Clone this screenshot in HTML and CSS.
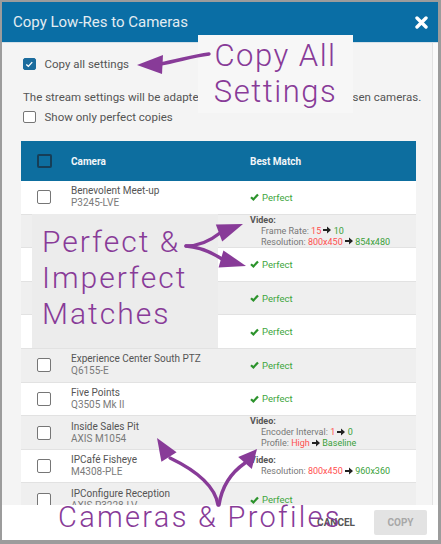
FILE: index.html
```html
<!DOCTYPE html>
<html lang="en">
<head>
<meta charset="utf-8">
<title>Copy Low-Res to Cameras</title>
<link rel="stylesheet" href="styles.css">
</head>
<body>
<div class="frame">
  <header class="dlg-head">
    <h1 class="dlg-title">Copy Low-Res to Cameras</h1>
    <svg class="close" viewBox="0 0 13 13" aria-label="Close"><path d="M2 2 L11 11 M11 2 L2 11" stroke="#fff" stroke-width="3.4" stroke-linecap="round"/></svg>
  </header>
  <div class="dlg-body">
    <div class="content">
      <label class="opt"><span class="cb checked"><svg viewBox="0 0 12 12"><path d="M2.6 6.2 L5 8.4 L9.4 3.6" fill="none" stroke="#fff" stroke-width="1.6"/></svg></span>Copy all settings</label>
      <p class="note">The stream settings will be adapted to the capabilities of the chosen cameras.</p>
      <label class="opt"><span class="cb"></span>Show only perfect copies</label>

      <div class="cams">
        <div class="thead">
          <span class="cell-cb"><span class="cb cb-head"></span></span>
          <span>Camera</span>
          <span>Best Match</span>
        </div>
        <div class="row">
          <span class="cell-cb"><span class="cb"></span></span>
          <span class="cam"><span class="name">Benevolent Meet-up</span><span class="model">P3245-LVE</span></span>
          <span class="ok"><svg class="chk" viewBox="0 0 9 8"><path d="M1 4.2 L3.4 6.4 L8 1.4" fill="none" stroke-width="2.2"/></svg>Perfect</span>
        </div>
        <div class="row">
          <span class="cell-cb"><span class="cb"></span></span>
          <span class="cam"><span class="name">Back Entrance</span><span class="model">M3106-L Mk II</span></span>
          <span class="detail"><b>Video:</b><span class="ln">Frame Rate: <i class="bad">15</i> <svg class="arr" viewBox="0 0 8 8"><path d="M0 3 H4 V0.4 L8 4 L4 7.6 V5 H0 Z"/></svg> <i class="good">10</i></span><span class="ln">Resolution: <i class="bad">800x450</i> <svg class="arr" viewBox="0 0 8 8"><path d="M0 3 H4 V0.4 L8 4 L4 7.6 V5 H0 Z"/></svg> <i class="good">854x480</i></span></span>
        </div>
        <div class="row">
          <span class="cell-cb"><span class="cb"></span></span>
          <span class="cam"><span class="name">Board Room</span><span class="model">P3225-LV Mk II</span></span>
          <span class="ok"><svg class="chk" viewBox="0 0 9 8"><path d="M1 4.2 L3.4 6.4 L8 1.4" fill="none" stroke-width="2.2"/></svg>Perfect</span>
        </div>
        <div class="row">
          <span class="cell-cb"><span class="cb"></span></span>
          <span class="cam"><span class="name">Break Room</span><span class="model">M3046-V</span></span>
          <span class="ok"><svg class="chk" viewBox="0 0 9 8"><path d="M1 4.2 L3.4 6.4 L8 1.4" fill="none" stroke-width="2.2"/></svg>Perfect</span>
        </div>
        <div class="row">
          <span class="cell-cb"><span class="cb"></span></span>
          <span class="cam"><span class="name">Conference Room A</span><span class="model">P3245-V</span></span>
          <span class="ok"><svg class="chk" viewBox="0 0 9 8"><path d="M1 4.2 L3.4 6.4 L8 1.4" fill="none" stroke-width="2.2"/></svg>Perfect</span>
        </div>
        <div class="row">
          <span class="cell-cb"><span class="cb"></span></span>
          <span class="cam"><span class="name">Experience Center South PTZ</span><span class="model">Q6155-E</span></span>
          <span class="ok"><svg class="chk" viewBox="0 0 9 8"><path d="M1 4.2 L3.4 6.4 L8 1.4" fill="none" stroke-width="2.2"/></svg>Perfect</span>
        </div>
        <div class="row">
          <span class="cell-cb"><span class="cb"></span></span>
          <span class="cam"><span class="name">Five Points</span><span class="model">Q3505 Mk II</span></span>
          <span class="ok"><svg class="chk" viewBox="0 0 9 8"><path d="M1 4.2 L3.4 6.4 L8 1.4" fill="none" stroke-width="2.2"/></svg>Perfect</span>
        </div>
        <div class="row">
          <span class="cell-cb"><span class="cb"></span></span>
          <span class="cam"><span class="name">Inside Sales Pit</span><span class="model">AXIS M1054</span></span>
          <span class="detail"><b>Video:</b><span class="ln">Encoder Interval: <i class="bad">1</i> <svg class="arr" viewBox="0 0 8 8"><path d="M0 3 H4 V0.4 L8 4 L4 7.6 V5 H0 Z"/></svg> <i class="good">0</i></span><span class="ln">Profile: <i class="bad">High</i> <svg class="arr" viewBox="0 0 8 8"><path d="M0 3 H4 V0.4 L8 4 L4 7.6 V5 H0 Z"/></svg> <i class="good">Baseline</i></span></span>
        </div>
        <div class="row">
          <span class="cell-cb"><span class="cb"></span></span>
          <span class="cam"><span class="name">IPCafé Fisheye</span><span class="model">M4308-PLE</span></span>
          <span class="detail"><b>Video:</b><span class="ln">Resolution: <i class="bad">800x450</i> <svg class="arr" viewBox="0 0 8 8"><path d="M0 3 H4 V0.4 L8 4 L4 7.6 V5 H0 Z"/></svg> <i class="good">960x360</i></span></span>
        </div>
        <div class="row">
          <span class="cell-cb"><span class="cb"></span></span>
          <span class="cam"><span class="name">IPConfigure Reception</span><span class="model">AXIS P3228-LV</span></span>
          <span class="ok"><svg class="chk" viewBox="0 0 9 8"><path d="M1 4.2 L3.4 6.4 L8 1.4" fill="none" stroke-width="2.2"/></svg>Perfect</span>
        </div>
      </div>
    </div>
    <div class="scroll-track"></div>
  </div>
  <footer class="dlg-foot">
    <button class="btn-cancel" type="button">CANCEL</button>
    <button class="btn-copy" type="button" disabled>COPY</button>
  </footer>

  <div class="anno anno-copy">Copy All<br>Settings</div>
  <div class="anno anno-match">Perfect &amp;<br>Imperfect<br>Matches</div>
  <div class="anno anno-cams">Cameras &amp; Profiles</div>

  <svg class="arrows" viewBox="0 0 441 544" aria-hidden="true">
    <g fill="none" stroke="#883b98" stroke-width="3.4" stroke-linecap="round">
      <path d="M209 54 C192 56 178 61 160 64"/>
      <path d="M186 246 C200 246 210 241 220 233"/>
      <path d="M186 246 C200 247 211 252 222 259"/>
      <path d="M218 505 C215 485 195 470 170 458"/>
      <path d="M219 505 C222 485 232 472 245 463"/>
    </g>
    <g fill="#883b98">
      <polygon points="137,65 163,55 162,74"/>
      <polygon points="243,224 215.8,224.5 222.2,241.5"/>
      <polygon points="246,266 223.4,250.4 218.6,267.6"/>
      <polygon points="157,438 176.6,452.2 161.4,461.8"/>
      <polygon points="257,449 238.2,457.1 251.8,468.9"/>
    </g>
  </svg>
</div>
</body>
</html>
```
FILE: styles.css
```css
html, body {
  margin: 0;
  padding: 0;
  background: #fff;
}

.frame {
  position: relative;
  width: 441px;
  height: 544px;
  box-sizing: border-box;
  border-style: solid;
  border-color: #9c9c9c;
  border-width: 2px 3px 4px 2px;
  display: flex;
  flex-direction: column;
  overflow: hidden;
  font-family: Roboto, "Liberation Sans", sans-serif;
}

/* header */
.dlg-head {
  flex: none;
  height: 40px;
  background: #0a6ea5;
  display: flex;
  align-items: center;
  justify-content: space-between;
  padding: 0 10px 0 11px;
}
.dlg-title {
  margin: 0;
  font-size: 15px;
  font-weight: 400;
  color: #e3ecf2;
}
.close {
  width: 13px;
  height: 13px;
  display: block;
}

/* body */
.dlg-body {
  flex: 1;
  min-height: 0;
  display: flex;
  background: #f4f4f4;
  border-top: 1px solid #d4e0e8;
}
.content {
  flex: 1;
  min-width: 0;
  padding: 14px 0 0 19px;
  overflow: hidden;
}
.scroll-track {
  width: 5px;
  flex: none;
  background: #fafafa;
  border-left: 1px solid #e2e2e2;
}

.opt {
  display: flex;
  align-items: center;
  height: 14px;
  font-size: 11.5px;
  color: #555;
}
.opt .cb {
  width: 12.5px;
  height: 12.5px;
  margin: 0 9px 0 2px;
}
.cb {
  display: block;
  box-sizing: border-box;
  width: 14px;
  height: 14px;
  border: 1.5px solid #767676;
  border-radius: 2px;
  background: #fff;
  flex: none;
}
.cb.checked {
  background: #1b6c9d;
  border-color: #1b6c9d;
}
.cb.checked svg {
  display: block;
  width: 100%;
  height: 100%;
}
.note {
  margin: 19px 0 6px 2px;
  font-size: 11.5px;
  line-height: 14px;
  color: #555;
  white-space: nowrap;
}

/* camera list */
.cams {
  margin-top: 17px;
  width: 395px;
}
.thead,
.row {
  display: grid;
  grid-template-columns: 50px 179px 1fr;
  align-items: center;
}
.thead {
  height: 40px;
  background: #0d6e9f;
  color: #f2f6f9;
  font-weight: 700;
  font-size: 10px;
}
.cell-cb {
  padding-left: 16px;
}
.cb-head {
  width: 14.5px;
  height: 14.5px;
  background: transparent;
  border: 2px solid #163e57;
}
.row {
  height: 33.6px;
  box-sizing: border-box;
  background: #fff;
  border-bottom: 1px solid #e2e2e2;
}
.row:nth-child(odd) {
  background: #efefef;
}
.cam {
  display: flex;
  flex-direction: column;
  font-size: 10px;
  line-height: 12px;
}
.name {
  color: #555;
}
.model {
  color: #7a7a7a;
}
.ok {
  display: flex;
  align-items: center;
  font-size: 9.5px;
  color: #3da63d;
}
.chk {
  width: 9px;
  height: 8px;
  margin-right: 3px;
  stroke: #2c932c;
}
.detail {
  display: flex;
  flex-direction: column;
  font-size: 9px;
  line-height: 11px;
  color: #777;
}
.detail b {
  color: #555;
  font-weight: 700;
}
.ln {
  display: block;
  padding-left: 11px;
  white-space: nowrap;
}
.ln i {
  font-style: normal;
}
.bad {
  color: #ff5050;
}
.good {
  color: #3a9f3a;
}
.arr {
  display: inline-block;
  width: 8px;
  height: 8px;
  vertical-align: -0.5px;
  fill: #222;
}

/* footer */
.dlg-foot {
  flex: none;
  height: 35px;
  background: #fff;
  display: flex;
  justify-content: flex-end;
  align-items: center;
  gap: 9px;
  padding-right: 11px;
}
.btn-cancel,
.btn-copy {
  font-family: Roboto, "Liberation Sans", sans-serif;
  font-size: 10px;
  font-weight: 700;
  height: 25px;
  border: 0;
  border-radius: 2px;
}
.btn-cancel {
  background: transparent;
  color: #555;
  padding: 0 10px;
}
.btn-copy {
  width: 53px;
  background: #e3e3e3;
  color: #a8a8a8;
  padding: 0;
}

/* annotations */
.anno {
  position: absolute;
  font-family: Roboto, "Liberation Sans", sans-serif;
  font-weight: 300;
  color: #883b98;
  white-space: nowrap;
}
.anno-copy {
  left: 196px;
  top: 33px;
  width: 155px;
  height: 78px;
  box-sizing: border-box;
  padding-top: 3px;
  background: #f7f7f7;
  font-size: 31px;
  line-height: 36px;
  letter-spacing: 1.5px;
  text-align: center;
}
.anno-match {
  left: 30px;
  top: 212px;
  width: 186px;
  height: 134px;
  box-sizing: border-box;
  padding: 10px 0 0 10px;
  background: #ececec;
  font-size: 30px;
  line-height: 36px;
  letter-spacing: 2px;
}
.anno-cams {
  left: 56px;
  top: 498px;
  font-size: 29px;
  line-height: 34px;
  letter-spacing: 2.3px;
}
.arrows {
  position: absolute;
  left: -2px;
  top: -2px;
  width: 441px;
  height: 544px;
  pointer-events: none;
}
```
